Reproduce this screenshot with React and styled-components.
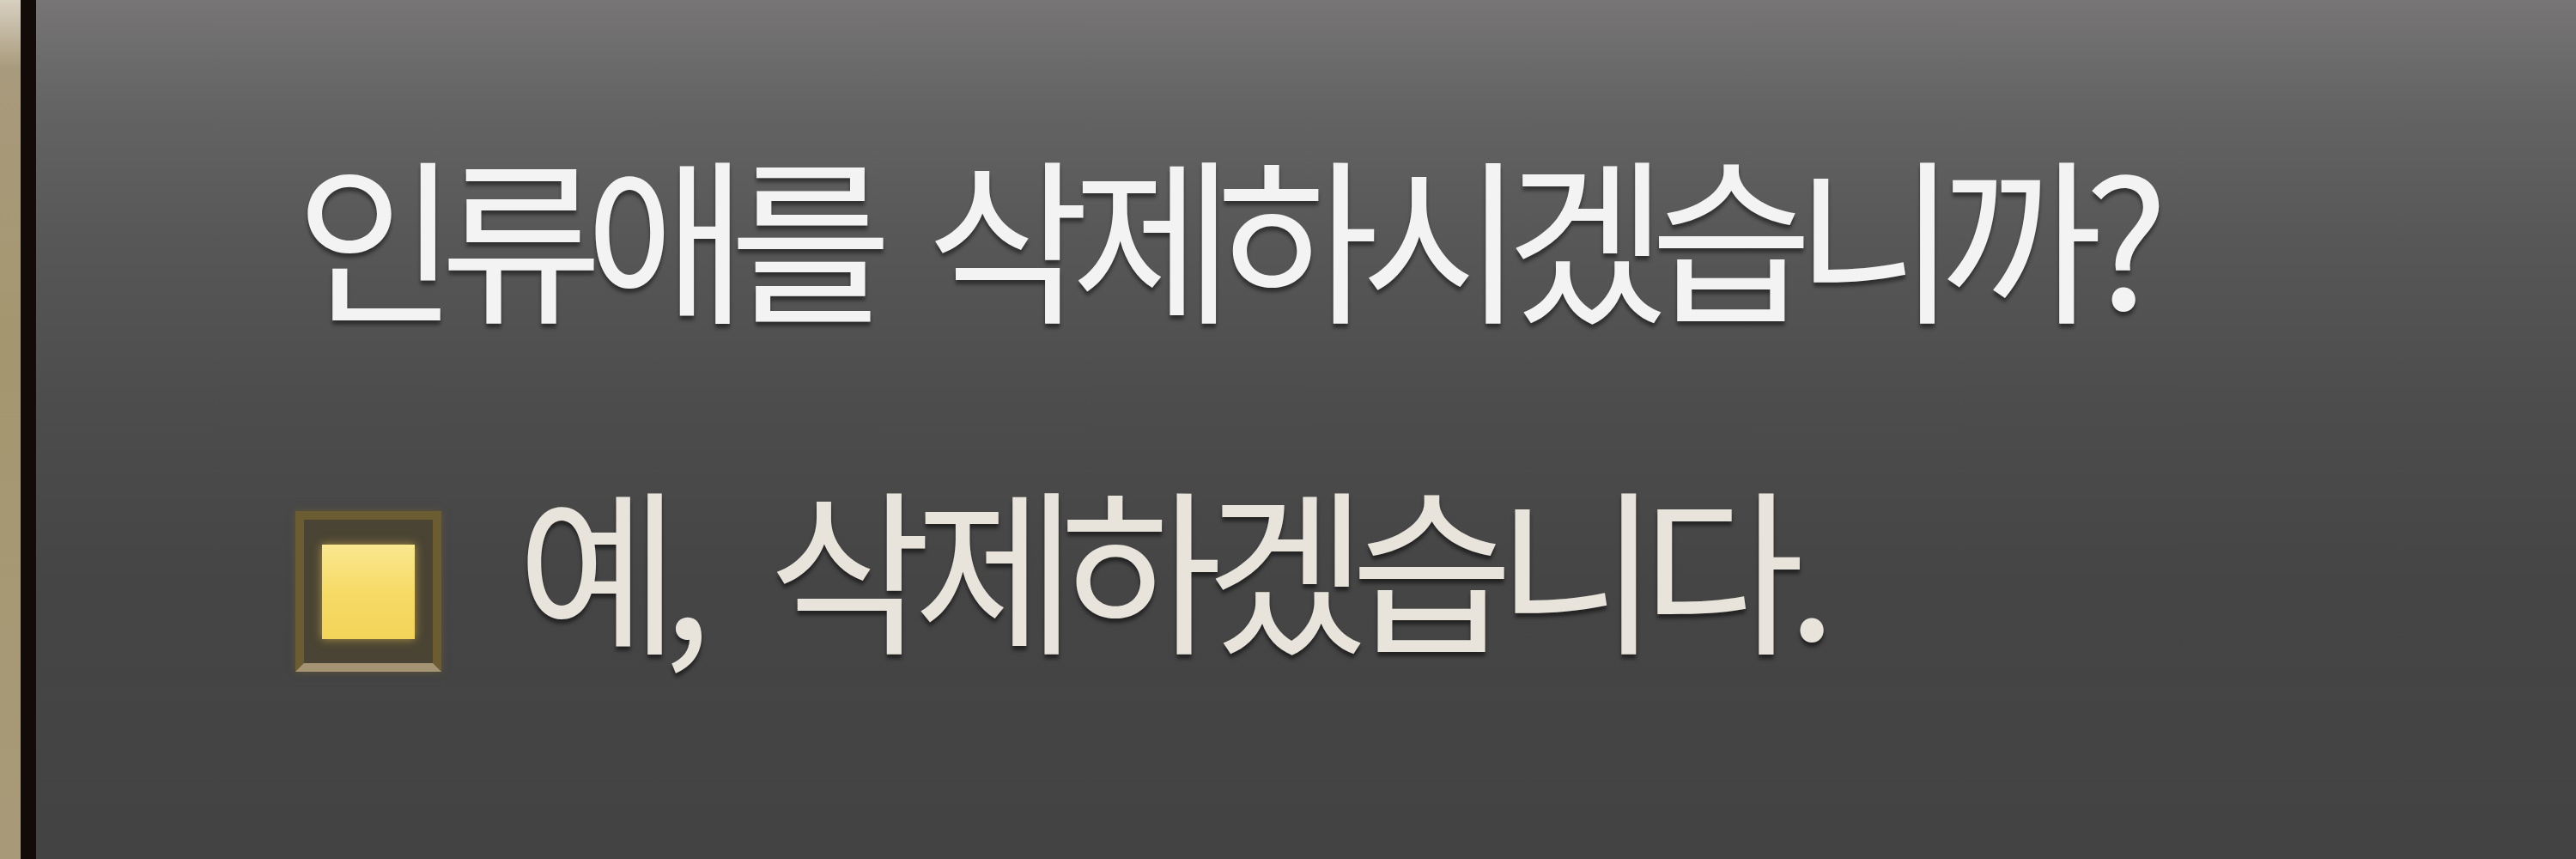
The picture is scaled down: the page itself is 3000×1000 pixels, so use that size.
import React from "react";
import styled, { createGlobalStyle } from "styled-components";

const GlobalStyle = createGlobalStyle`
  html, body {
    margin: 0;
    padding: 0;
    background: #444444;
  }
  body {
    font-family: "Noto Sans CJK KR", "Noto Sans", sans-serif;
  }
`;

const Screen = styled.div`
  width: 3000px;
  height: 1000px;
  display: flex;
  overflow: hidden;
`;

const Frame = styled.div`
  width: 24px;
  flex-shrink: 0;
  background: linear-gradient(
    to bottom,
    #d8d0c0 0%,
    #a89a7c 8%,
    #a4976f 40%,
    #a89a78 100%
  );
  border-right: 18px solid #120b07;
`;

const Panel = styled.div`
  flex: 1;
  display: flex;
  flex-direction: column;
  padding: 167px 0 0 302px;
  background: linear-gradient(
    to bottom,
    #777575 0%,
    #646464 12%,
    #575757 28%,
    #4c4c4c 48%,
    #454545 68%,
    #434343 100%
  );
`;

const Title = styled.div`
  font-size: 206px;
  line-height: 1;
  letter-spacing: -21px;
  word-spacing: 36px;
  color: #f3f3f3;
  text-shadow: 0 5px 4px rgba(0, 0, 0, 0.45);
  white-space: nowrap;
`;

const Option = styled.label`
  display: flex;
  align-items: flex-start;
  gap: 88px;
  margin-top: 179px;
`;

const Check = styled.span`
  width: 170px;
  height: 187px;
  margin-top: 43px;
  flex-shrink: 0;
  box-sizing: border-box;
  display: flex;
  align-items: center;
  justify-content: center;
  background: #4a4434;
  border: 10px solid #6b5c32;
  border-bottom-color: #a49474;
  box-shadow: 0 0 8px rgba(120, 100, 40, 0.5);

  &::after {
    content: "";
    width: 108px;
    height: 110px;
    background: linear-gradient(to bottom, #fae890 0%, #f6da66 50%, #f3d45a 100%);
    box-shadow: 0 0 10px rgba(240, 200, 80, 0.6);
  }
`;

const OptionText = styled.span`
  font-size: 206px;
  line-height: 1;
  letter-spacing: -20px;
  word-spacing: 60px;
  color: #e8e4dc;
  text-shadow: 0 5px 4px rgba(0, 0, 0, 0.5);
  white-space: nowrap;
`;

export default function App() {
  return (
    <>
      <GlobalStyle />
      <Screen>
        <Frame />
        <Panel>
          <Title>인류애를 삭제하시겠습니까?</Title>
          <Option>
            <Check />
            <OptionText>예, 삭제하겠습니다.</OptionText>
          </Option>
        </Panel>
      </Screen>
    </>
  );
}
